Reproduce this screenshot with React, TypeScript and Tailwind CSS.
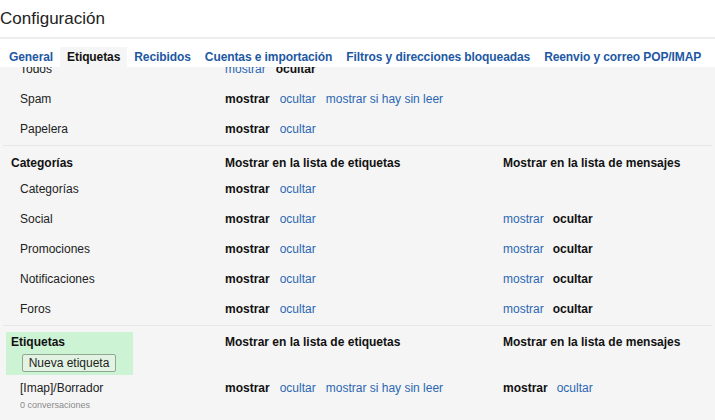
import React from "react";

type Row = {
  name: string;
  list: "show" | "hide" | "unread";
  msgs?: "show" | "hide";
  sub?: string;
};

const TABS = [
  "General",
  "Etiquetas",
  "Recibidos",
  "Cuentas e importación",
  "Filtros y direcciones bloqueadas",
  "Reenvio y correo POP/IMAP",
];

const SYSTEM: Row[] = [
  { name: "Todos", list: "hide" },
  { name: "Spam", list: "unread" },
  { name: "Papelera", list: "show" },
];

const CATEGORIES: Row[] = [
  { name: "Categorías", list: "show" },
  { name: "Social", list: "show", msgs: "hide" },
  { name: "Promociones", list: "show", msgs: "hide" },
  { name: "Notificaciones", list: "show", msgs: "hide" },
  { name: "Foros", list: "show", msgs: "hide" },
];

function Link({ children }: { children: React.ReactNode }) {
  return <span className="text-[#2b67b3] cursor-pointer">{children}</span>;
}

function Current({ children }: { children: React.ReactNode }) {
  return <span className="font-bold text-[#111]">{children}</span>;
}

function ListCell({ mode }: { mode: Row["list"] }) {
  return (
    <div className="flex items-center gap-[10px]">
      {mode === "hide" ? <Link>mostrar</Link> : <Current>mostrar</Current>}
      {mode === "hide" ? <Current>ocultar</Current> : <Link>ocultar</Link>}
      {mode === "unread" && <Link>mostrar si hay sin leer</Link>}
    </div>
  );
}

function MsgCell({ mode }: { mode?: Row["msgs"] }) {
  if (!mode) return <div />;
  return (
    <div className="flex items-center gap-[9px]">
      {mode === "hide" ? <Link>mostrar</Link> : <Current>mostrar</Current>}
      {mode === "hide" ? <Current>ocultar</Current> : <Link>ocultar</Link>}
    </div>
  );
}

function LabelRow({ row }: { row: Row }) {
  return (
    <div className="grid grid-cols-[225px_278px_1fr] h-[30px] items-center">
      <div className="pl-[20px] text-[#222]">{row.name}</div>
      <ListCell mode={row.list} />
      <MsgCell mode={row.msgs} />
    </div>
  );
}

function SectionHead({ title }: { title: string }) {
  return (
    <>
      <div className="pl-[11px] font-bold text-[#111]">{title}</div>
      <div className="font-bold text-[#111]">Mostrar en la lista de etiquetas</div>
      <div className="font-bold text-[#111]">Mostrar en la lista de mensajes</div>
    </>
  );
}

export default function App() {
  return (
    <div className="w-[715px] h-[420px] overflow-hidden bg-white text-[12px] leading-[16px] font-['Liberation_Sans',Arial,sans-serif]">
      {/* Title */}
      <div className="h-[37px] flex items-center">
        <h1 className="text-[17px] text-[#222]">Configuración</h1>
      </div>
      <div className="h-[2px] bg-[#ececec]" />

      {/* Tabs */}
      <div className="mt-[8px] flex h-[20px] pl-[2px] whitespace-nowrap tracking-[-0.09px]">
        {TABS.map((t) => (
          <div
            key={t}
            className={
              t === "Etiquetas"
                ? "shrink-0 px-[7px] flex items-center font-bold text-[#111] bg-[#f5f5f5]"
                : "shrink-0 px-[7px] flex items-center font-bold text-[#1d58a3]"
            }
          >
            {t}
          </div>
        ))}
      </div>

      {/* Content */}
      <div className="h-[353px] overflow-hidden bg-[#f5f5f5]">
        <div className="-mt-[13px]">
          {SYSTEM.map((r) => (
            <LabelRow key={r.name} row={r} />
          ))}

          <div className="h-[1px] mt-[1px] bg-[#e6e6e6] mx-[3px]" />

          <div className="grid grid-cols-[225px_278px_1fr] pt-[9px] h-[28px]">
            <SectionHead title="Categorías" />
          </div>
          {CATEGORIES.map((r) => (
            <LabelRow key={r.name} row={r} />
          ))}

          <div className="h-[1px] mt-[1px] bg-[#e6e6e6] mx-[3px]" />

          {/* Etiquetas */}
          <div className="grid grid-cols-[225px_278px_1fr] pt-[6px]">
            <div className="ml-[6px] w-[127px] h-[43px] bg-[#cdf3d5] pl-[5px] pt-[2px]">
              <div className="font-bold text-[#111]">Etiquetas</div>
              <button className="mt-[4px] ml-[11px] h-[18px] w-[94px] rounded-[2px] border border-[#8fa88f] bg-[#e3f3e3] text-[12px] leading-[14px] text-[#222]">
                Nueva etiqueta
              </button>
            </div>
            <div className="pt-[2px] font-bold text-[#111]">
              Mostrar en la lista de etiquetas
            </div>
            <div className="pt-[2px] font-bold text-[#111]">
              Mostrar en la lista de mensajes
            </div>
          </div>

          <div className="grid grid-cols-[225px_278px_1fr] pt-[5px]">
            <div className="pl-[20px]">
              <div className="text-[#222] h-[16px]">[Imap]/Borrador</div>
              <div className="mt-[3px] text-[9px] leading-[12px] text-[#8a8a8a]">
                0 conversaciones
              </div>
            </div>
            <div className="h-[16px]">
              <ListCell mode="unread" />
            </div>
            <div className="h-[16px]">
              <div className="flex items-center gap-[9px]">
                <Current>mostrar</Current>
                <Link>ocultar</Link>
              </div>
            </div>
          </div>
        </div>
      </div>
    </div>
  );
}
